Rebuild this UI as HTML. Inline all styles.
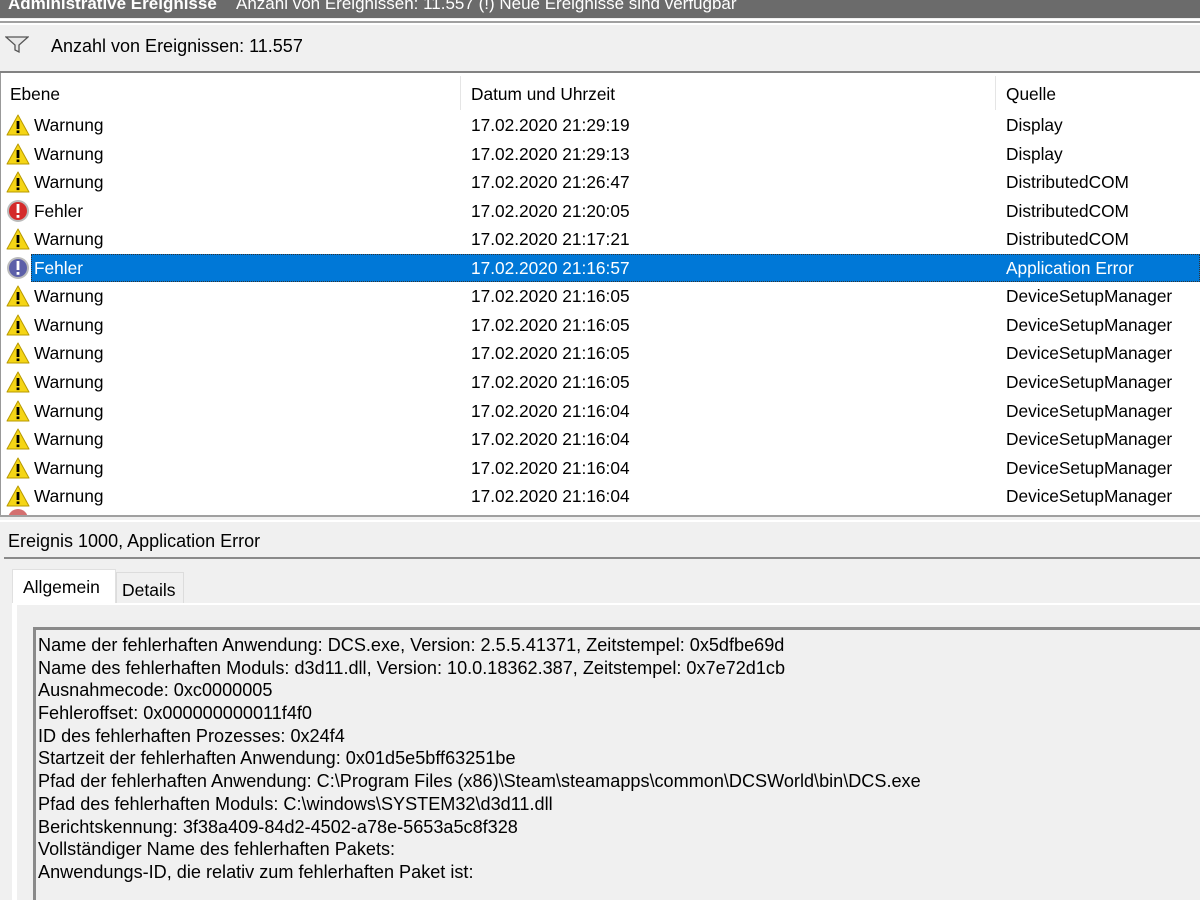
<!DOCTYPE html>
<html style="overflow:hidden"><head><meta charset="utf-8"><style>
*{margin:0;padding:0;box-sizing:border-box}
html,body{width:1200px;height:900px;overflow:hidden}
body{background:#f0f0f0;font-family:"Liberation Sans",sans-serif;font-size:17px;color:#000;position:relative}
.abs{position:absolute}
.top{left:0;top:0;width:1200px;height:18px;background:#6b6b6b;color:#fff;font-size:17px;line-height:12px;overflow:hidden}
.top b{position:absolute;left:8px;top:-2px;font-weight:bold}
.top span{position:absolute;left:236px;top:-2px}
.row{position:absolute;left:0;width:1200px;height:28px;line-height:28px;white-space:nowrap;font-size:17.3px}
.row .a{position:absolute;left:34px}
.row .b{position:absolute;left:471px}
.row .c{position:absolute;left:1006px}
.row svg{position:absolute;left:6px;top:3px}
.sel .hl{position:absolute;left:31px;top:0;width:1169px;height:28px;background:#0078d7;border:1px dotted #333}
.sel span{color:#fff}
.tb div{height:22.7px;line-height:22.7px;white-space:nowrap}
</style></head><body>
<div class="abs top"><b>Administrative Ereignisse</b><span>Anzahl von Ereignissen: 11.557 (!) Neue Ereignisse sind verfügbar</span></div>
<div class="abs" style="left:0;top:19px;width:1200px;height:2px;background:#fff"></div>
<div class="abs" style="left:0;top:21px;width:1200px;height:2px;background:#a0a0a0"></div>
<div class="abs" style="left:0;top:23px;width:1200px;height:2px;background:#fff"></div>
<svg class="abs" style="left:5px;top:36px" width="24" height="18" viewBox="0 0 24 18"><path d="M1 1 L23 1 L14 9 L14 16 L10 14 L10 9 Z" fill="#e8e8e8" stroke="#555" stroke-width="1.3"/></svg>
<div class="abs" style="left:51px;top:36px;font-size:18px">Anzahl von Ereignissen: 11.557</div>
<div class="abs" style="left:0;top:71px;width:1200px;height:2px;background:#828282"></div>
<div class="abs" style="left:0;top:73px;width:1200px;height:442px;background:#fff;border-left:1px solid #999"></div>
<div class="abs" style="left:460px;top:76px;width:1px;height:34px;background:#e5e5e5"></div>
<div class="abs" style="left:995px;top:76px;width:1px;height:34px;background:#e5e5e5"></div>
<div class="abs" style="left:10px;top:84px;font-size:17.3px">Ebene</div>
<div class="abs" style="left:471px;top:84px;font-size:17.3px">Datum und Uhrzeit</div>
<div class="abs" style="left:1006px;top:84px;font-size:17.3px">Quelle</div>
<div id="rows"></div>
<div class="abs" style="left:0;top:515px;width:1200px;height:2px;background:#a0a0a0"></div>
<div class="abs" style="left:0;top:520px;width:1200px;height:2px;background:#fff"></div>
<div class="abs" style="left:8px;top:531px;font-size:18px">Ereignis 1000, Application Error</div>
<div class="abs" style="left:4px;top:557px;width:1196px;height:2px;background:#8a8a8a"></div>
<div class="abs" style="left:12px;top:569px;width:104px;height:36px;background:#fff;border:1px solid #e0e0e0;border-bottom:none"></div>
<div class="abs" style="left:23px;top:577px;font-size:17.5px">Allgemein</div>
<div class="abs" style="left:116px;top:572px;width:68px;height:31px;background:#f0f0f0;border:1px solid #dcdcdc;border-bottom:none"></div>
<div class="abs" style="left:122px;top:580px;font-size:17.5px">Details</div>
<div class="abs" style="left:12px;top:603px;width:1188px;height:2px;background:#fff"></div>
<div class="abs" style="left:12px;top:603px;width:5px;height:297px;background:#fff"></div>
<div class="abs" style="left:33px;top:627px;width:1167px;height:273px;border-top:3px solid #8a8a8a;border-left:3px solid #8a8a8a"></div>
<div class="abs tb" style="left:38px;top:634px;font-size:18.1px">
<div>Name der fehlerhaften Anwendung: DCS.exe, Version: 2.5.5.41371, Zeitstempel: 0x5dfbe69d</div>
<div>Name des fehlerhaften Moduls: d3d11.dll, Version: 10.0.18362.387, Zeitstempel: 0x7e72d1cb</div>
<div>Ausnahmecode: 0xc0000005</div>
<div>Fehleroffset: 0x000000000011f4f0</div>
<div>ID des fehlerhaften Prozesses: 0x24f4</div>
<div>Startzeit der fehlerhaften Anwendung: 0x01d5e5bff63251be</div>
<div>Pfad der fehlerhaften Anwendung: C:\Program Files (x86)\Steam\steamapps\common\DCSWorld\bin\DCS.exe</div>
<div>Pfad des fehlerhaften Moduls: C:\windows\SYSTEM32\d3d11.dll</div>
<div>Berichtskennung: 3f38a409-84d2-4502-a78e-5653a5c8f328</div>
<div>Vollständiger Name des fehlerhaften Pakets:</div>
<div>Anwendungs-ID, die relativ zum fehlerhaften Paket ist:</div>
</div>
<script>
var W='<svg width="24" height="22" viewBox="0 0 24 22"><path d="M12 1 L23 21 L1 21 Z" fill="#f5d515" stroke="#b89a00" stroke-width="1" stroke-linejoin="round"/><rect x="10.6" y="7" width="2.8" height="8" fill="#000"/><rect x="10.6" y="16.5" width="2.8" height="2.6" fill="#000"/></svg>';
function E(c){return '<svg width="24" height="24" viewBox="0 0 24 24"><circle cx="12" cy="11" r="11" fill="#bbb"/><circle cx="12" cy="11" r="9" fill="'+c+'"/><rect x="10.6" y="4" width="2.8" height="9" fill="#fff"/><rect x="10.6" y="15" width="2.8" height="2.8" fill="#fff"/></svg>';}
var d=[["W","17.02.2020 21:29:19","Display"],["W","17.02.2020 21:29:13","Display"],["W","17.02.2020 21:26:47","DistributedCOM"],["F","17.02.2020 21:20:05","DistributedCOM"],["W","17.02.2020 21:17:21","DistributedCOM"],["S","17.02.2020 21:16:57","Application Error"],["W","17.02.2020 21:16:05","DeviceSetupManager"],["W","17.02.2020 21:16:05","DeviceSetupManager"],["W","17.02.2020 21:16:05","DeviceSetupManager"],["W","17.02.2020 21:16:05","DeviceSetupManager"],["W","17.02.2020 21:16:04","DeviceSetupManager"],["W","17.02.2020 21:16:04","DeviceSetupManager"],["W","17.02.2020 21:16:04","DeviceSetupManager"],["W","17.02.2020 21:16:04","DeviceSetupManager"]];
var h='';
d.forEach(function(r,i){var t=111+i*28.55;var ic=r[0]=="W"?W:E(r[0]=="F"?"#d42a2a":"#5c5fa8");
h+='<div class="row'+(r[0]=="S"?' sel':'')+'" style="top:'+t+'px">'+(r[0]=="S"?'<div class="hl"></div>':'')+ic+'<span class="a">'+(r[0]=="W"?"Warnung":"Fehler")+'</span><span class="b">'+r[1]+'</span><span class="c">'+r[2]+'</span></div>';});
h+='<div class="abs" style="left:8px;top:509px;width:20px;height:6px;overflow:hidden"><div style="width:20px;height:20px;border-radius:50%;background:#d47070"></div></div>';
document.getElementById('rows').innerHTML=h;
</script>
</body></html>
